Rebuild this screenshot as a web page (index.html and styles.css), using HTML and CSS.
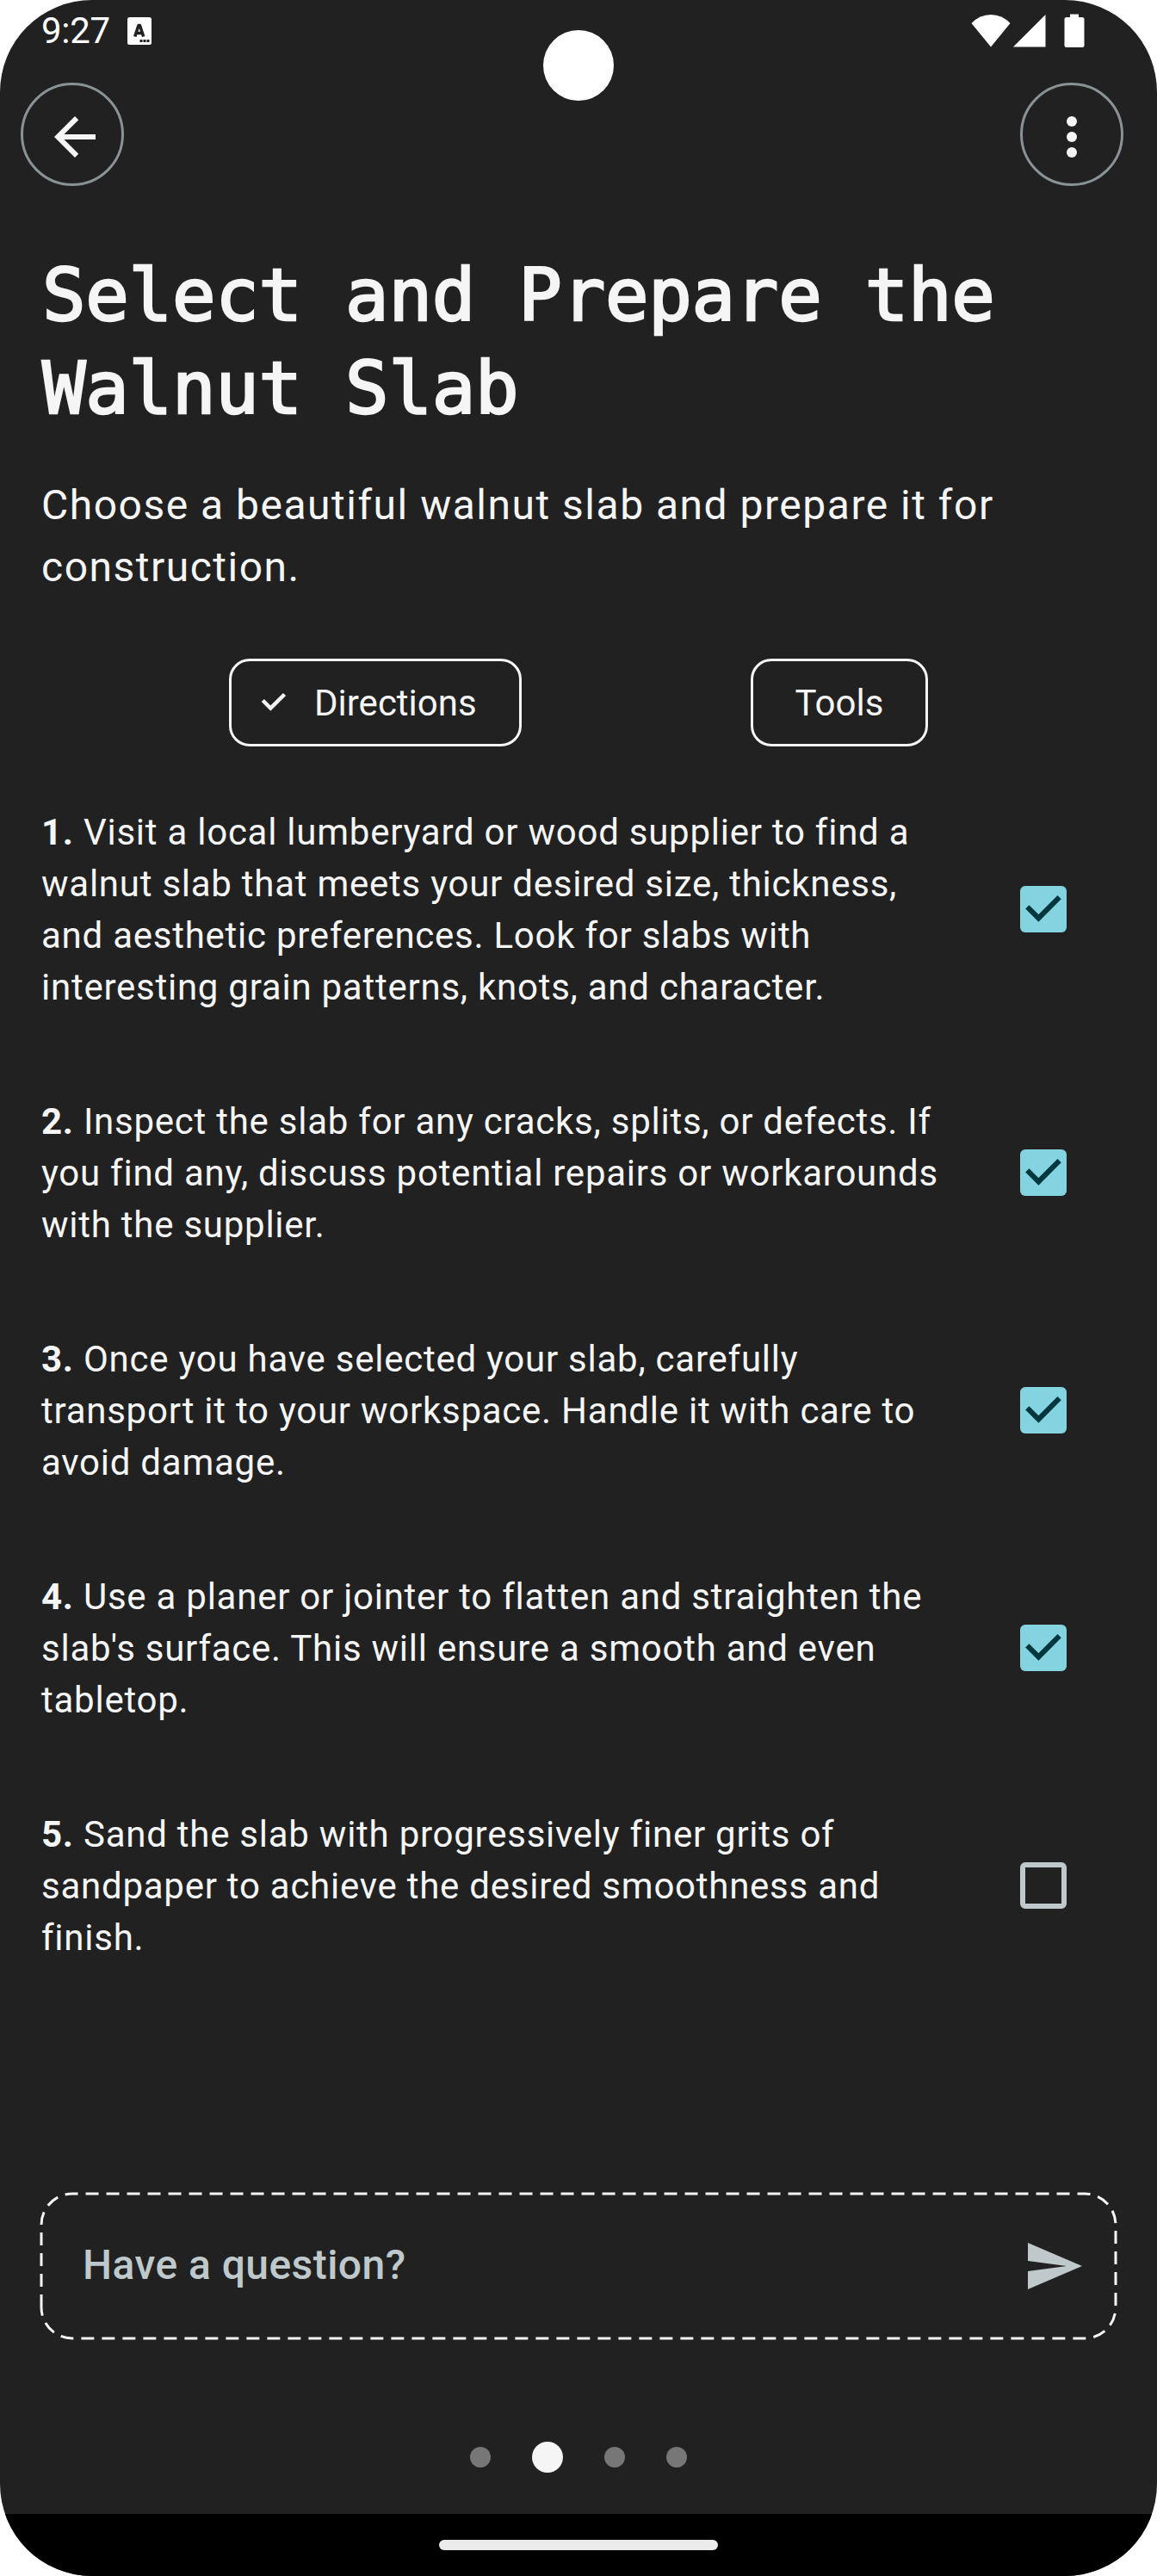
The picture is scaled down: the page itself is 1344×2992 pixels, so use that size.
FILE: index.html
```html
<!DOCTYPE html>
<html lang="en">
<head>
<meta charset="utf-8">
<title>Select and Prepare the Walnut Slab</title>
<link rel="stylesheet" href="styles.css">
</head>
<body>
<div class="screen">
  <header class="status">
    <div class="status-left">
      <span class="time">9:27</span>
      <svg class="badge-icon" width="28" height="32" viewBox="0 0 28 32"><rect width="28" height="32" rx="2.5" fill="#fff"/><path d="M8.7 22.500L13 9.500h1.400l4.300 13M10.300 18.500h6.800" fill="none" stroke="#212121" stroke-width="3.600" stroke-linejoin="round"/><path d="M14.500 26h3v3h-3zM18.500 26h3v3h-3zM22.500 26h3v3h-3z" fill="#212121"/></svg>
    </div>
    <div class="status-right">
      <svg width="46" height="40" viewBox="0 0 46 40"><path d="M0.500 11Q10 1 23 1T45.500 11L23 38.500z" fill="#fff"/></svg>
      <svg width="38" height="40" viewBox="0 0 38 40"><path d="M0 38.500L37.500 1v37.500z" fill="#fff"/></svg>
      <svg class="battery" width="24" height="40" viewBox="0 0 24 40"><path d="M7 0.500h10V4h4a2.500 2.500 0 0 1 2.500 2.500V36.500a2.500 2.500 0 0 1-2.500 2.500H3A2.500 2.500 0 0 1 .5 36.500V6.500A2.500 2.500 0 0 1 3 4h4z" fill="#fff"/></svg>
    </div>
  </header>
  <div class="camera"></div>
  <nav class="topbar">
    <button class="round" aria-label="Back"><svg width="72" height="72" viewBox="0 0 24 24"><path d="M20 11H7.830l5.590-5.590L12 4l-8 8 8 8 1.410-1.410L7.830 13H20v-2z" fill="#f5f5f5"/></svg></button>
    <button class="round" aria-label="More"><svg width="72" height="72" viewBox="0 0 24 24"><g fill="#f5f5f5"><circle cx="12" cy="6" r="2"/><circle cx="12" cy="12" r="2"/><circle cx="12" cy="18" r="2"/></g></svg></button>
  </nav>
  <main>
    <h1>Select and Prepare the Walnut Slab</h1>
    <p class="lead">Choose a beautiful walnut slab and prepare it for construction.</p>
    <div class="chips">
      <button class="chip selected"><svg width="54" height="54" viewBox="0 0 54 54"><path d="M14.300 24.500L23.300 33.500L39.500 17.500" fill="none" stroke="#f5f5f5" stroke-width="4.500"/></svg><span>Directions</span></button>
      <button class="chip tools"><span>Tools</span></button>
    </div>
    <ol class="steps">
      <li><p><b>1.</b> Visit a local lumberyard or wood supplier to find a walnut slab that meets your desired size, thickness, and aesthetic preferences. Look for slabs with interesting grain patterns, knots, and character.</p><span class="box on"><svg width="54" height="54" viewBox="0 0 54 54"><path d="M8.300 24.300L21.400 37.400L45.600 13.200" fill="none" stroke="#00363d" stroke-width="6"/></svg></span></li>
      <li><p><b>2.</b> Inspect the slab for any cracks, splits, or defects. If you find any, discuss potential repairs or workarounds with the supplier.</p><span class="box on"><svg width="54" height="54" viewBox="0 0 54 54"><path d="M8.300 24.300L21.400 37.400L45.600 13.200" fill="none" stroke="#00363d" stroke-width="6"/></svg></span></li>
      <li><p><b>3.</b> Once you have selected your slab, carefully transport it to your workspace. Handle it with care to avoid damage.</p><span class="box on"><svg width="54" height="54" viewBox="0 0 54 54"><path d="M8.300 24.300L21.400 37.400L45.600 13.200" fill="none" stroke="#00363d" stroke-width="6"/></svg></span></li>
      <li><p><b>4.</b> Use a planer or jointer to flatten and straighten the slab's surface. This will ensure a smooth and even tabletop.</p><span class="box on"><svg width="54" height="54" viewBox="0 0 54 54"><path d="M8.300 24.300L21.400 37.400L45.600 13.200" fill="none" stroke="#00363d" stroke-width="6"/></svg></span></li>
      <li><p><b>5.</b> Sand the slab with progressively finer grits of sandpaper to achieve the desired smoothness and finish.</p><span class="box"></span></li>
    </ol>
  </main>
  <section class="ask">
    <svg class="ask-border" width="1252" height="172" viewBox="-2 -2 1252 172"><path d="M0 132V36A36 36 0 0 1 36 0H1212A36 36 0 0 1 1248 36V132A36 36 0 0 1 1212 168H36A36 36 0 0 1 0 132" fill="none" stroke="#f5f5f5" stroke-width="3" stroke-dasharray="15 9"/></svg>
    <span class="ask-label">Have a question?</span>
    <svg width="72" height="72" viewBox="0 0 24 24"><path d="M2.010 21L23 12 2.010 3 2 10l15 2-15 2z" fill="#bfc8ca"/></svg>
  </section>
  <div class="pager"><i></i><i class="current"></i><i></i><i></i></div>
  <footer class="gesture"><i></i></footer>
</div>
</body>
</html>
```
FILE: styles.css
```css
* { box-sizing: border-box; }
body { margin: 0; background: #fff; }
button { padding: 0; background: none; color: inherit; font: inherit; letter-spacing: inherit; }
svg { display: block; flex: none; }

.screen {
  position: relative;
  display: flex;
  flex-direction: column;
  width: 1344px;
  height: 2992px;
  overflow: hidden;
  border-radius: 107px;
  background: #212121;
  color: #f5f5f5;
  font-family: Roboto, sans-serif;
  font-size: 42px;
}

.status { display: flex; justify-content: space-between; height: 96px; padding: 16px 84px 0 48px; color: #fff; }
.status-left { display: flex; align-items: flex-start; gap: 20px; }
.time { line-height: 40px; letter-spacing: -0.3px; }
.badge-icon { margin-top: 4px; }
.status-right { display: flex; gap: 3px; }
.battery { margin-left: 18px; }
.camera { position: absolute; left: 631px; top: 35px; width: 82px; height: 82px; border-radius: 50%; background: #fff; }

.topbar { display: flex; justify-content: space-between; padding: 0 39px 0 24px; }
.round { display: flex; align-items: center; justify-content: center; width: 120px; height: 120px; border: 3px solid #899294; border-radius: 50%; }
.round svg { margin: 6px 0 0 6px; }
.round:last-child svg { margin-left: 0; }

main { padding: 73px 48px 0; }
h1 { margin: 0; padding-left: 1px; font: 400 84px/108px "DejaVu Sans Mono", monospace; letter-spacing: -0.270px; -webkit-text-stroke: 2.500px #f5f5f5; }
.lead { width: 1200px; margin: 46px 0 0; font-size: 48px; line-height: 72px; letter-spacing: 1.500px; }

.chips { display: flex; justify-content: space-evenly; margin: 70px -48px 69px; }
.chip { display: flex; align-items: center; justify-content: center; height: 102px; border: 3px solid #f5f5f5; border-radius: 24px; letter-spacing: 0; }
.chip.selected { width: 340px; justify-content: flex-start; padding-left: 22px; gap: 20px; }
.chip.tools { width: 206px; }

.steps { display: flex; flex-direction: column; gap: 96px; margin: 0; padding: 0; list-style: none; }
.steps li { display: flex; align-items: center; justify-content: space-between; padding-right: 57px; }
.steps p { width: 1056px; margin: 1px 0 -1px; line-height: 60px; letter-spacing: 0.750px; }
.box { width: 54px; height: 54px; border: 6px solid #bfc8ca; border-radius: 6px; }
.box.on { border: 0; background: #83d3e0; }

.ask { position: relative; display: flex; align-items: center; justify-content: space-between; height: 168px; margin: 268px 48px 0; padding: 0 36px 0 48px; color: #bfc8ca; font-size: 48px; font-weight: 500; letter-spacing: 0.450px; }
.ask-border { position: absolute; left: -2px; top: -2px; }
.ask-label { padding-bottom: 3px; }

.pager { display: flex; align-items: center; justify-content: center; gap: 48px; height: 36px; margin: 120px 0 48px; }
.pager i { width: 24px; height: 24px; border-radius: 50%; background: #777; }
.pager .current { width: 36px; height: 36px; background: #f5f5f5; }

.gesture { display: flex; justify-content: center; flex: 1; padding-top: 30px; background: #000; }
.gesture i { width: 324px; height: 12px; border-radius: 6px; background: #ebebeb; }
```
